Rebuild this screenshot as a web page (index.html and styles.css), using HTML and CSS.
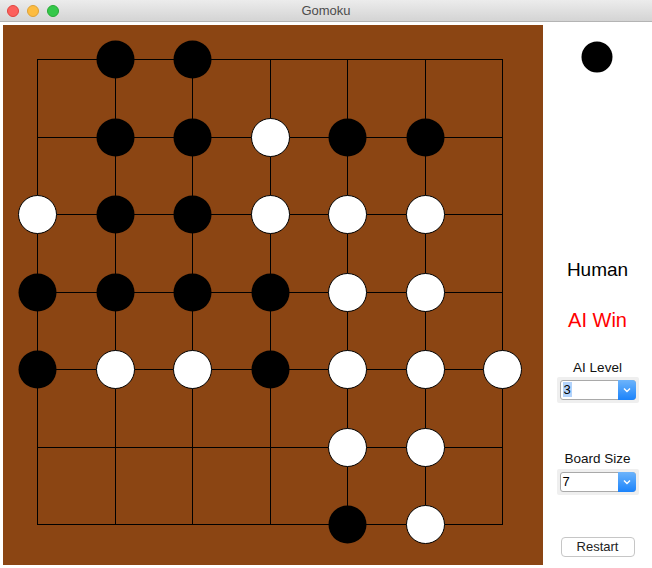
FILE: index.html
```html
<!DOCTYPE html>
<html>
<head>
<meta charset="utf-8">
<title>Gomoku</title>
<link rel="stylesheet" href="styles.css">
</head>
<body>
<div class="window">
  <div class="titlebar">
    <div class="lights">
      <span class="light red"></span>
      <span class="light yellow"></span>
      <span class="light green"></span>
    </div>
    <div class="title">Gomoku</div>
    <div></div>
  </div>
  <div class="content">
    <svg class="board" width="540" height="540" viewBox="0 0 540 540">
      <g stroke="#000" stroke-width="1" fill="none">
        <rect x="34.5" y="34.5" width="465" height="465"/>
        <line x1="112.5" y1="34.5" x2="112.5" y2="499.5"/>
        <line x1="189.5" y1="34.5" x2="189.5" y2="499.5"/>
        <line x1="267.5" y1="34.5" x2="267.5" y2="499.5"/>
        <line x1="344.5" y1="34.5" x2="344.5" y2="499.5"/>
        <line x1="422.5" y1="34.5" x2="422.5" y2="499.5"/>
        <line x1="34.5" y1="112.5" x2="499.5" y2="112.5"/>
        <line x1="34.5" y1="189.5" x2="499.5" y2="189.5"/>
        <line x1="34.5" y1="267.5" x2="499.5" y2="267.5"/>
        <line x1="34.5" y1="344.5" x2="499.5" y2="344.5"/>
        <line x1="34.5" y1="422.5" x2="499.5" y2="422.5"/>
      </g>
      <g class="black">
        <circle cx="112.5" cy="34.5" r="19"/>
        <circle cx="189.5" cy="34.5" r="19"/>
        <circle cx="112.5" cy="112.5" r="19"/>
        <circle cx="189.5" cy="112.5" r="19"/>
        <circle cx="344.5" cy="112.5" r="19"/>
        <circle cx="422.5" cy="112.5" r="19"/>
        <circle cx="112.5" cy="189.5" r="19"/>
        <circle cx="189.5" cy="189.5" r="19"/>
        <circle cx="34.5" cy="267.5" r="19"/>
        <circle cx="112.5" cy="267.5" r="19"/>
        <circle cx="189.5" cy="267.5" r="19"/>
        <circle cx="267.5" cy="267.5" r="19"/>
        <circle cx="34.5" cy="344.5" r="19"/>
        <circle cx="267.5" cy="344.5" r="19"/>
        <circle cx="344.5" cy="499.5" r="19"/>
      </g>
      <g class="white">
        <circle cx="267.5" cy="112.5" r="19"/>
        <circle cx="34.5" cy="189.5" r="19"/>
        <circle cx="267.5" cy="189.5" r="19"/>
        <circle cx="344.5" cy="189.5" r="19"/>
        <circle cx="422.5" cy="189.5" r="19"/>
        <circle cx="344.5" cy="267.5" r="19"/>
        <circle cx="422.5" cy="267.5" r="19"/>
        <circle cx="112.5" cy="344.5" r="19"/>
        <circle cx="189.5" cy="344.5" r="19"/>
        <circle cx="344.5" cy="344.5" r="19"/>
        <circle cx="422.5" cy="344.5" r="19"/>
        <circle cx="499.5" cy="344.5" r="19"/>
        <circle cx="344.5" cy="422.5" r="19"/>
        <circle cx="422.5" cy="422.5" r="19"/>
        <circle cx="422.5" cy="499.5" r="19"/>
      </g>
    </svg>
    <div class="panel">
      <svg class="turn" width="32" height="32" viewBox="0 0 32 32"><circle cx="16" cy="16" r="15.5" fill="#000"/></svg>
      <div class="player">Human</div>
      <div class="status">AI Win</div>
      <div class="label label-level">AI Level</div>
      <div class="select-wrap wrap-level">
        <div class="select">
          <span class="value"><span class="hl">3</span></span>
          <span class="arrow"><svg width="8" height="6" viewBox="0 0 8 6"><path d="M1 1.5 L4 4.5 L7 1.5" fill="none" stroke="#fff" stroke-width="1.4"/></svg></span>
        </div>
      </div>
      <div class="label label-size">Board Size</div>
      <div class="select-wrap wrap-size">
        <div class="select">
          <span class="value">7</span>
          <span class="arrow"><svg width="8" height="6" viewBox="0 0 8 6"><path d="M1 1.5 L4 4.5 L7 1.5" fill="none" stroke="#fff" stroke-width="1.4"/></svg></span>
        </div>
      </div>
      <div class="button">Restart</div>
    </div>
  </div>
</div>
</body>
</html>
```

FILE: styles.css
```css
html, body {
  margin: 0;
  padding: 0;
  background: #ffffff;
}

.window {
  width: 652px;
  height: 568px;
  overflow: hidden;
  font-family: "Liberation Sans", Arial, sans-serif;
  background: #ffffff;
}

.titlebar {
  box-sizing: border-box;
  height: 22px;
  background: linear-gradient(#ececec, #d4d4d4);
  border-bottom: 1px solid #b4b4b4;
  display: grid;
  grid-template-columns: 1fr auto 1fr;
  align-items: center;
}

.lights {
  display: flex;
  gap: 8px;
  padding-left: 7px;
}

.light {
  width: 12px;
  height: 12px;
  border-radius: 50%;
  box-sizing: border-box;
}

.red { background: #fc605c; border: 1px solid #e0443e; }
.yellow { background: #fdbc40; border: 1px solid #dea236; }
.green { background: #34c84a; border: 1px solid #27aa35; }

.title {
  font-size: 13px;
  color: #4c4c4c;
  line-height: 21px;
}

.content {
  display: flex;
  padding: 3px 0 0 3px;
}

.board {
  display: block;
  background: #8b4513;
  flex: none;
}

.black circle { fill: #000; }
.white circle { fill: #fff; stroke: #000; stroke-width: 1; }

.panel {
  width: 109px;
  display: flex;
  flex-direction: column;
  align-items: center;
}

.turn {
  display: block;
  margin-top: 16px;
  margin-left: -2px;
}

.player {
  margin-top: 186px;
  font-size: 19px;
  line-height: 22px;
  color: #000;
}

.status {
  margin-top: 27px;
  font-size: 20px;
  line-height: 24px;
  color: #ff0000;
}

.label {
  font-size: 13.5px;
  line-height: 16px;
  color: #111;
}

.label-level { margin-top: 28px; }
.label-size { margin-top: 48px; }

.select-wrap {
  background: #efefef;
  padding: 3px;
  border-radius: 2px;
}

.wrap-level { margin-top: 1px; }
.wrap-size { margin-top: 2px; }

.select {
  box-sizing: border-box;
  width: 76px;
  height: 20px;
  display: flex;
  background: #fff;
  border: 1px solid #a9a9a9;
  border-radius: 3px;
}

.value {
  flex: 1;
  font-size: 13px;
  line-height: 18px;
  padding-left: 2px;
  color: #000;
}

.hl {
  background: #b3d3fb;
  padding: 0 1px;
}

.arrow {
  width: 18px;
  margin: -1px -1px -1px 0;
  background: linear-gradient(#6db4fb, #1b83fb);
  border-radius: 0 4px 4px 0;
  display: flex;
  align-items: center;
  justify-content: center;
}

.arrow svg { display: block; }

.button {
  box-sizing: border-box;
  margin-top: 42px;
  width: 74px;
  height: 20px;
  border: 1px solid #c6c6c6;
  border-radius: 4px;
  background: #fff;
  font-size: 13px;
  line-height: 18px;
  text-align: center;
  color: #222;
}
```
